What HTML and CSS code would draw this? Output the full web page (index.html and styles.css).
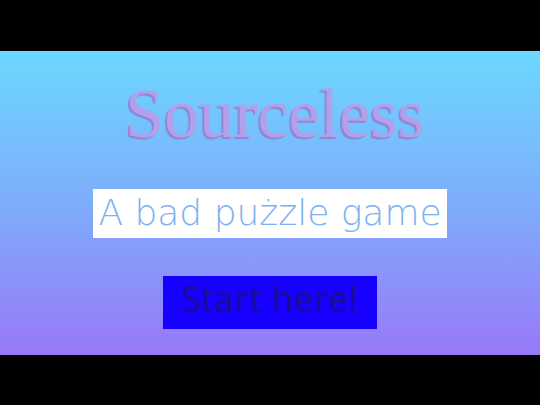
FILE: index.html
```html
<!DOCTYPE html>
<html>
<head>
<meta charset="utf-8">
<link rel="stylesheet" href="styles.css">
</head>
<body>
<main class="stage">
  <h1 class="title">Sourceless</h1>
  <p class="subtitle">A bad pużzle game</p>
  <button class="start">Start here!</button>
</main>
</body>
</html>
```
FILE: styles.css
```css
html, body {
  margin: 0;
  height: 100%;
  background: #000;
}
body {
  display: flex;
  align-items: center;
}
.stage {
  width: 100%;
  height: 304px;
  background: linear-gradient(to bottom, #6bd8ff 0%, #7eadfb 50%, #9878f9 100%);
  display: flex;
  flex-direction: column;
  align-items: center;
}
.title {
  margin: 28px 0 0;
  padding-left: 10px;
  font-family: "Liberation Serif", serif;
  font-weight: normal;
  font-size: 70px;
  line-height: 70px;
  color: #b3a0ea;
  text-shadow: -2px 2px 1px #8f86d8;
}
.subtitle {
  margin: 40px 0 0;
  background: #fff;
  font-family: "DejaVu Sans", sans-serif;
  font-weight: 200;
  font-size: 36px;
  line-height: 41px;
  padding: 3px 5px 5px;
  color: #7fb1f0;
}
.start {
  margin: 38px 0 0;
  width: 214px;
  height: 53px;
  border: none;
  background: #1600ff;
  color: #1c0c9c;
  font-family: "Noto Sans", sans-serif;
  font-size: 36px;
  line-height: 45px;
  padding: 0 0 8px;
}
```
